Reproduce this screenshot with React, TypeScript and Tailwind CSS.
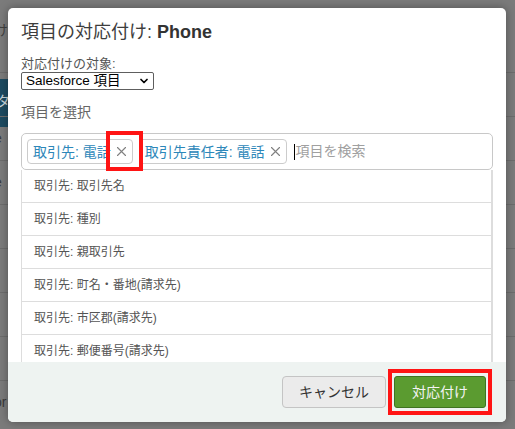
import { ChevronDown } from "lucide-react"

const FIELDS = [
  "取引先: 取引先名",
  "取引先: 種別",
  "取引先: 親取引先",
  "取引先: 町名・番地(請求先)",
  "取引先: 市区郡(請求先)",
  "取引先: 郵便番号(請求先)",
  "取引先: 都道府県(請求先)",
]

const SELECTED = ["取引先: 電話", "取引先責任者: 電話"]

const FONT = { fontFamily: '"Liberation Sans", "Noto Sans CJK JP", sans-serif' }

function XMark() {
  return (
    <svg width="11" height="11" viewBox="0 0 11 11" fill="none" stroke="#808080" strokeWidth="1.1" strokeLinecap="round">
      <path d="M1.5 1.5l8 8M9.5 1.5l-8 8" />
    </svg>
  )
}

function Chip({ label }: { label: string }) {
  return (
    <div className="flex items-center h-[25px] border border-[#cccccc] rounded-[4px] pl-[5px] bg-white">
      <span className="text-[14px] leading-none text-[#2d87b9] whitespace-nowrap">{label}</span>
      <span className="w-[21px] h-full flex items-center justify-center">
        <XMark />
      </span>
    </div>
  )
}

export default function App() {
  return (
    <div className="relative w-[515px] h-[429px] overflow-hidden bg-[#7b7b7b]" style={FONT}>
      {/* page behind the dialog, dimmed */}
      <div className="flex flex-col text-[14px] text-[#3f3f3f]">
        <div className="h-[72px] pt-[20px] -ml-[20px] whitespace-nowrap">付け</div>
        <div className="h-[44px] flex border-t border-[#6c6c6c]">
          <div className="w-[40px] mt-[6px] h-[48px] bg-[#1d4b61] text-[#c9d6dc] pt-[12px] -ml-[10px] pl-[6px]">タ</div>
        </div>
        {["e", "e", "", "", "", "", "or"].map((t, i) => (
          <div key={i} className="h-[44px] border-t border-[#6c6c6c] flex items-center -ml-[6px] text-[#3a3a3a]">
            {t}
          </div>
        ))}
      </div>

      {/* dialog */}
      <div className="absolute left-[8px] top-[8px] w-[498px] h-[414px] bg-white rounded-[5px] shadow-[0_0_10px_rgba(0,0,0,0.35)] flex flex-col overflow-hidden">
        <div className="flex-1 overflow-hidden pt-[13px] px-[13px]">
          <h1 className="text-[18px] leading-[22px] text-[#3d3d3d]">
            項目の対応付け: <span className="font-bold text-[#333]">Phone</span>
          </h1>

          <div className="mt-[13px] text-[13px] leading-[16px] text-[#555]">対応付けの対象:</div>
          <div className="w-[133px] h-[18px] border border-[#5e5e5e] rounded-[2px] flex items-center justify-between pl-[4px] pr-[3px] text-[13.5px] text-black">
            <span className="leading-none">Salesforce 項目</span>
            <ChevronDown size={12} strokeWidth={3.5} />
          </div>

          <div className="mt-[12px] text-[14px] leading-[20px] text-[#666]">項目を選択</div>

          <div className="relative mt-[11px] h-[37px] border border-[#c8c8c8] rounded-[5px] flex items-start gap-[6px] pl-[5px] pt-[5px]">
            {SELECTED.map((s) => (
              <Chip key={s} label={s} />
            ))}
            <div className="flex items-center h-[25px] ml-[1px]">
              <span className="w-[1px] h-[16px] bg-black" />
              <span className="text-[14px] text-[#a0a0a0] ml-[1px]">項目を検索</span>
            </div>
            <div className="absolute left-[84px] top-[-3px] w-[37px] h-[40px] border-4 border-[#ff1414]" />
          </div>

          <div className="border-l border-r-2 border-[#dddddd]">
            {FIELDS.map((f) => (
              <div key={f} className="h-[33px] border-b border-[#dddddd] flex items-center pl-[12px] text-[12px] text-[#555]">
                {f}
              </div>
            ))}
          </div>
        </div>

        <div className="h-[60px] shrink-0 bg-[#eef3f1] flex items-center justify-end gap-[8px] pr-[20px]">
          <button className="w-[104px] h-[32px] rounded-[4px] border border-[#c4c4c4] bg-[#ebebeb] text-[14px] text-[#333]">
            キャンセル
          </button>
          <div className="relative">
            <button className="w-[92px] h-[32px] rounded-[3px] border border-[#3f7322] bg-[#5b9b30] text-[14px] text-[#f4f4f4]">
              対応付け
            </button>
            <div className="absolute -left-[6px] -right-[6px] -top-[7px] -bottom-[7px] border-4 border-[#ff1414]" />
          </div>
        </div>
      </div>
    </div>
  )
}
